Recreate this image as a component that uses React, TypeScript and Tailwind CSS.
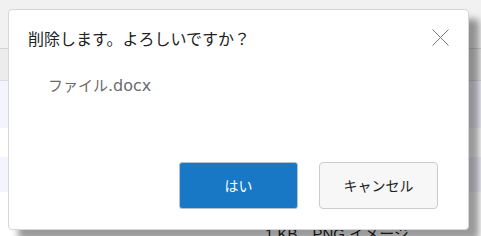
import React from "react";

export default function App() {
  const font = { fontFamily: '"Segoe UI", "Liberation Sans", "Noto Sans CJK JP", sans-serif' };
  const jp = { fontFamily: '"Noto Sans CJK JP", sans-serif' };
  return (
    <div className="relative w-[481px] h-[236px] overflow-hidden bg-white" style={font}>
      {/* background page */}
      <div className="flex flex-col w-full">
        <div className="h-[49px] shrink-0 bg-[#f1f1f1] border-b border-[#d4d4d4]" />
        <div className="h-[32px] shrink-0 bg-[#ececec] border-b border-[#dcdcdc]" />
        <div className="h-[47px] shrink-0 bg-[#f4f4fe]" />
        <div className="h-[29px] shrink-0 bg-white" />
        <div className="h-[35px] shrink-0 bg-[#f4f4fe]" />
        <div className="h-[30px] shrink-0 bg-white" />
        <div className="h-[30px] shrink-0 bg-white pl-[265px] text-[15px] text-[#222] leading-[20px] pt-[2px]">1 KB　PNG イメージ</div>
      </div>

      {/* dialog */}
      <div className="absolute left-[8px] top-[9px] w-[461px] h-[221px] bg-white border border-[#d3d6de] rounded-[4px] shadow-[10px_10px_7px_rgba(0,0,0,0.4)] flex flex-col">
        <div className="flex items-center justify-between pl-[19px] pr-[19px] pt-[16px]">
          <div className="text-[16px] leading-[24px] text-[#222]" style={jp}>
            削除します。よろしいですか？
          </div>
          <svg width="17" height="17" viewBox="0 0 17 17" className="mt-[-1px]">
            <path d="M0.5 0.5 L16.5 16.5 M16.5 0.5 L0.5 16.5" stroke="#7a7a7a" strokeWidth="1" fill="none" />
          </svg>
        </div>
        <div className="pl-[39px] mt-[23px] leading-[24px] text-[#6b6b6b] flex items-baseline">
          <span className="text-[15px]" style={jp}>ファイル</span>
          <span className="text-[16px]" style={{ fontFamily: '"DejaVu Sans", sans-serif' }}>.docx</span>
        </div>
        <div className="flex-1" />
        <div className="flex justify-end gap-[21px] pr-[30px] pb-[20px]">
          <button className="w-[119px] h-[47px] bg-[#1878c6] border border-[#b7c3cf] rounded-[3px] text-white text-[14px]" style={jp}>
            はい
          </button>
          <button className="w-[119px] h-[47px] bg-[#f7f7f7] border border-[#cccccc] rounded-[4px] text-[#222] text-[14px]" style={jp}>
            キャンセル
          </button>
        </div>
      </div>
    </div>
  );
}
